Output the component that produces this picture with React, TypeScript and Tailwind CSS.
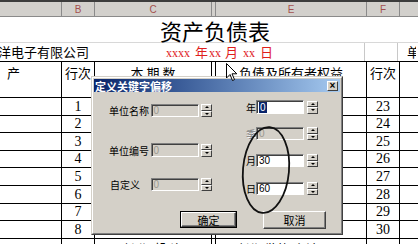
import React from "react";

const cjk = { fontFamily: '"Noto Sans CJK SC", "Noto Sans", sans-serif' };
const serif = { fontFamily: '"Liberation Serif", "Noto Sans CJK SC", serif' };

function Spinner() {
  return (
    <div className="w-[11px] h-[13px] flex flex-col">
      <div className="flex-1 bg-[#d4d0c8] border border-t-white border-l-white border-r-[#404040] border-b-[#404040] flex items-center justify-center">
        <div className="w-0 h-0 border-l-[2px] border-r-[2px] border-b-[2px] border-l-transparent border-r-transparent border-b-black" />
      </div>
      <div className="flex-1 bg-[#d4d0c8] border border-t-white border-l-white border-r-[#404040] border-b-[#404040] flex items-center justify-center">
        <div className="w-0 h-0 border-l-[2px] border-r-[2px] border-t-[2px] border-l-transparent border-r-transparent border-t-black" />
      </div>
    </div>
  );
}

function Field({ value, disabled, selected, w }: { value: string; disabled?: boolean; selected?: boolean; w: string }) {
  return (
    <div
      className={`${w} h-full border border-t-[#808080] border-l-[#808080] border-r-white border-b-white shadow-[inset_1px_1px_0_#404040] flex items-center pl-[2px] text-[10px] leading-[11px] ${disabled ? "bg-[#d4d0c8] text-[#9a9890]" : "bg-white text-black"}`}
      style={{ fontFamily: '"Liberation Sans", sans-serif' }}
    >
      {selected ? <span className="bg-[#0a246a] text-white px-[1px]">{value}</span> : value}
    </div>
  );
}

function Dialog() {
  return (
    <div className="absolute left-[91px] top-[76px] w-[252px] h-[159px] bg-[#d4d0c8] border border-t-[#d4d0c8] border-l-[#d4d0c8] border-r-[#404040] border-b-[#404040]" style={cjk}>
      <div className="w-full h-full border border-t-white border-l-white border-r-[#808080] border-b-[#808080] p-[1px] flex flex-col">
        <div className="h-[13px] bg-linear-to-r from-[#0a246a] to-[#a6caf0] flex items-center justify-between pl-[1px] pr-[2px]">
          <span className="text-white font-bold text-[11px] leading-[12px]">定义关键字偏移</span>
          <div className="w-[11px] h-[10px] bg-[#d4d0c8] border border-t-white border-l-white border-r-[#404040] border-b-[#404040] flex items-center justify-center text-[10px] leading-[8px] font-bold text-black" style={{ fontFamily: '"Liberation Sans", sans-serif' }}>
            ×
          </div>
        </div>
        <div className="h-[119px] flex">
          <div className="flex flex-col pl-[15px] pt-[12px] w-[118px]">
            <div className="h-[13px] flex items-center">
              <span className="w-[42px] text-[10px] leading-[11px] text-black">单位名称</span>
              <Field w="w-[49px]" value="0" disabled />
              <div className="ml-[2px]"><Spinner /></div>
            </div>
            <div className="h-[14px] mt-[26px] flex items-center">
              <span className="w-[42px] text-[10px] leading-[11px] text-black">单位编号</span>
              <Field w="w-[49px]" value="0" disabled />
              <div className="ml-[2px]"><Spinner /></div>
            </div>
            <div className="h-[13px] mt-[21px] flex items-center">
              <span className="w-[42px] text-[10px] leading-[11px] text-black pl-[1px]">自定义</span>
              <Field w="w-[49px]" value="0" disabled />
              <div className="ml-[2px]"><Spinner /></div>
            </div>
          </div>
          <div className="flex flex-col ml-[34px] pt-[8px]">
            <div className="h-[14px] flex items-center">
              <span className="w-[10px] text-[10px] leading-[11px] text-black">年</span>
              <Field w="w-[48px]" value="0" selected />
              <div className="ml-[3px]"><Spinner /></div>
            </div>
            <div className="h-[13px] mt-[13px] flex items-center">
              <span className="w-[10px] text-[10px] leading-[11px] text-[#808080] [text-shadow:1px_1px_0_#fff]">季</span>
              <Field w="w-[48px]" value="0" disabled />
              <div className="ml-[3px]"><Spinner /></div>
            </div>
            <div className="h-[13px] mt-[14px] flex items-center">
              <span className="w-[10px] text-[10px] leading-[11px] text-black">月</span>
              <Field w="w-[48px]" value="30" />
              <div className="ml-[3px]"><Spinner /></div>
            </div>
            <div className="h-[13px] mt-[15px] flex items-center">
              <span className="w-[10px] text-[10px] leading-[11px] text-black">日</span>
              <Field w="w-[48px]" value="60" />
              <div className="ml-[3px]"><Spinner /></div>
            </div>
          </div>
        </div>
        <div className="flex h-[18px]">
          <div className="ml-[86px] w-[57px] h-[17px] border border-black">
            <div className="w-full h-full bg-[#d4d0c8] border border-t-white border-l-white border-r-[#404040] border-b-[#404040] shadow-[inset_-1px_-1px_0_#808080] flex items-center justify-center text-[11px] leading-[12px] text-black">
              确定
            </div>
          </div>
          <div className="ml-[26px] w-[63px] h-[18px] bg-[#d4d0c8] border border-t-white border-l-white border-r-[#404040] border-b-[#404040] shadow-[inset_-1px_-1px_0_#808080] flex items-center justify-center text-[11px] leading-[12px] text-black">
            取消
          </div>
        </div>
      </div>
    </div>
  );
}

const rowHeights = ["h-[18px]", "h-[17px]", "h-[18px]", "h-[17px]", "h-[18px]", "h-[18px]", "h-[17px]", "h-[18px]"];

function DataRow({ n, m, h }: { n: number; m: number; h: string }) {
  const c = "h-full border-r border-b border-black flex items-center justify-center";
  return (
    <div className={`flex ${h}`}>
      <div className={`w-[62px] ${c}`} />
      <div className={`w-[33px] ${c} text-[14px] leading-[14px]`} style={serif}>{n}</div>
      <div className={`w-[117px] ${c}`} />
      <div className={`w-[4px] ${c}`} />
      <div className={`w-[151px] ${c}`} />
      <div className={`w-[33px] ${c} text-[14px] leading-[14px]`} style={serif}>{m}</div>
      <div className={`w-[18px] h-full border-b border-black`} />
    </div>
  );
}

export default function App() {
  const hc = "h-full border-r border-[#8a8a8a] flex items-center justify-center text-[10px] text-[#a4504f]";
  return (
    <div className="relative w-[418px] h-[244px] overflow-hidden bg-white" style={cjk}>
      {/* column header */}
      <div className="flex h-[17px] border-t-2 border-[#3c3c3c] bg-[#d2d0cc] border-b border-b-[#8a8a8a]" style={{ fontFamily: '"Liberation Sans", sans-serif' }}>
        <div className={`w-[62px] ${hc}`} />
        <div className={`w-[33px] ${hc}`}>B</div>
        <div className={`w-[117px] ${hc}`}>C</div>
        <div className={`w-[4px] ${hc}`} />
        <div className={`w-[151px] ${hc}`}>E</div>
        <div className={`w-[33px] ${hc}`}>F</div>
        <div className="w-[18px]" />
      </div>
      {/* title */}
      <div className="h-[26px] flex items-center justify-center pl-[12px] border-b border-[#d8d8d8] text-[22px] leading-[24px] text-black">
        资产负债表
      </div>
      {/* company / date */}
      <div className="flex h-[19px] border-b border-black">
        <div className="w-[95px] h-full flex items-center text-[13px] leading-[14px] text-black whitespace-nowrap -ml-[2px]">洋电子有限公司</div>
        <div className="w-[272px] h-full border-r border-[#c8c8c8] flex items-center justify-center pr-[18px] text-[#e0201c] whitespace-nowrap leading-[14px]">
          <span className="text-[12px] leading-[14px] pt-[2px]" style={serif}>xxxx</span>
          <span className="text-[13px] leading-[14px] ml-[5px]">年</span>
          <span className="text-[12px] leading-[14px] pt-[2px] ml-[1px]" style={serif}>xx</span>
          <span className="text-[13px] leading-[14px] ml-[4px]">月</span>
          <span className="text-[12px] leading-[14px] pt-[2px] ml-[5px]" style={serif}>xx</span>
          <span className="text-[13px] leading-[14px] ml-[5px]">日</span>
        </div>
        <div className="w-[33px] h-full border-r border-[#c8c8c8]" />
        <div className="w-[18px] h-full flex items-center pl-[9px] text-[13px] leading-[14px] whitespace-nowrap overflow-hidden">单位</div>
      </div>
      {/* table headers */}
      <div className="flex h-[36px] border-b border-black text-[13px] leading-[14px] text-black">
        <div className="w-[62px] h-full border-r border-black pl-[7px] pt-[4px]">产</div>
        <div className="w-[33px] h-full border-r border-black flex justify-center pt-[4px] whitespace-nowrap">行次</div>
        <div className="w-[117px] h-full border-r border-black flex justify-center pt-[4px] whitespace-nowrap">本 期 数</div>
        <div className="w-[4px] h-full border-r border-black" />
        <div className="w-[151px] h-full border-r border-black flex justify-center pt-[4px] whitespace-nowrap">负债及所有者权益</div>
        <div className="w-[33px] h-full border-r border-black flex justify-center pt-[4px] whitespace-nowrap">行次</div>
        <div className="w-[18px] h-full" />
      </div>
      {[1, 2, 3, 4, 5, 6, 7, 8].map((n, i) => (
        <DataRow key={n} n={n} m={n + 22} h={rowHeights[i]} />
      ))}
      <div className="flex h-[18px] text-[13px] leading-[14px] text-black">
        <div className="w-[62px] h-full border-r border-black" />
        <div className="w-[33px] h-full border-r border-black" />
        <div className="w-[117px] h-full border-r border-black flex justify-center pt-[3px] whitespace-nowrap">长 期 投 资</div>
        <div className="w-[4px] h-full border-r border-black" />
        <div className="w-[151px] h-full border-r border-black flex justify-center pt-[3px] whitespace-nowrap">长期借款 小计项目</div>
        <div className="w-[33px] h-full border-r border-black" />
        <div className="w-[18px] h-full" />
      </div>

      <Dialog />

      {/* hand-drawn ellipse */}
      <svg className="absolute left-0 top-0 pointer-events-none" width="418" height="244">
        <ellipse cx="266" cy="170" rx="23" ry="43" transform="rotate(5 266 170)" fill="none" stroke="#111" strokeWidth="1.8" />
      </svg>
      {/* mouse cursor */}
      <svg className="absolute left-[226px] top-[63px] pointer-events-none" width="12" height="19" viewBox="0 0 12 19">
        <path d="M0.5 0.5 L0.5 15 L4 11.5 L6.5 17.5 L8.5 16.6 L6 10.8 L10.8 10.8 Z" fill="#fff" stroke="#000" strokeWidth="1" strokeLinejoin="round" />
      </svg>
    </div>
  );
}
